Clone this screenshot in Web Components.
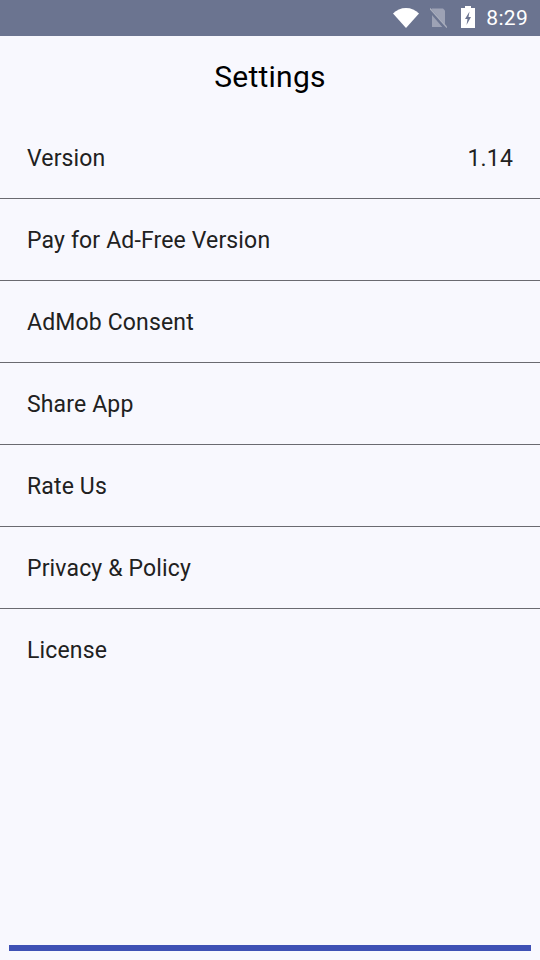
<!DOCTYPE html>
<html>
<head>
<meta charset="utf-8">
<style>
  html, body { margin: 0; height: 100%; background: #f8f8fe; }
  body { font-family: Roboto, "Liberation Sans", sans-serif; }
</style>
</head>
<body>
<settings-screen>
  <settings-row>Version<span slot="value">1.14</span></settings-row>
  <settings-row>Pay for Ad-Free Version</settings-row>
  <settings-row>AdMob Consent</settings-row>
  <settings-row>Share App</settings-row>
  <settings-row>Rate Us</settings-row>
  <settings-row>Privacy &amp; Policy</settings-row>
  <settings-row last>License</settings-row>
</settings-screen>
<script>
class StatusBar extends HTMLElement {
  constructor() {
    super();
    this.attachShadow({mode: 'open'});
  }

  connectedCallback() {
    this.shadowRoot.innerHTML = `
      <style>
        :host {
          display: flex;
          align-items: center;
          justify-content: flex-end;
          height: 36px;
          background: #6b7490;
          color: #fff;
          padding-right: 12px;
          box-sizing: border-box;
        }
        svg { display: block; flex: none; }
        .wifi { margin-right: 11px; }
        .sim { margin-right: 14px; }
        .battery { margin-right: 11px; margin-bottom: 2px; }
        .time { font-size: 21px; line-height: 36px; letter-spacing: 0.3px; }
      </style>
      <svg class="wifi" width="26" height="20" viewBox="0 0 26 20">
        <path d="M0 5.500C3.400 2 8 0 13 0s9.600 2 13 5.500L13 20z" fill="#fff"/>
      </svg>
      <svg class="sim" width="17" height="20" viewBox="0 0 17 20">
        <path d="M2 0.500h11l2 2V19H2z" fill="#9da2b5"/>
        <path d="M0 2l15 17.500" stroke="#6b7490" stroke-width="3.500" fill="none"/>
        <path d="M0 0.500l17 19" stroke="#a9aebd" stroke-width="1.500" fill="none"/>
      </svg>
      <svg class="battery" width="14" height="22" viewBox="0 0 14 22">
        <path d="M4 0h6v2h4v20H0V2h4z" fill="#fff"/>
        <path d="M8.500 5.500L4 13h2.500L5.500 19l4.500-8h-2.500z" fill="#6b7490"/>
      </svg>
      <span class="time">8:29</span>
    `;
  }
}

class SettingsRow extends HTMLElement {
  constructor() {
    super();
    this.attachShadow({mode: 'open'});
  }

  connectedCallback() {
    this.shadowRoot.innerHTML = `
      <style>
        :host {
          display: flex;
          align-items: center;
          justify-content: space-between;
          height: 82px;
          box-sizing: border-box;
          padding: 2px 27px 0;
          font-size: 23px;
          letter-spacing: 0.15px;
          color: #212121;
          border-bottom: 1px solid #6a6a70;
        }
        :host([last]) { border-bottom-color: transparent; }
      </style>
      <slot></slot>
      <slot name="value"></slot>
    `;
  }
}

class SettingsScreen extends HTMLElement {
  constructor() {
    super();
    this.attachShadow({mode: 'open'});
  }

  connectedCallback() {
    this.shadowRoot.innerHTML = `
      <style>
        :host {
          display: flex;
          flex-direction: column;
          height: 960px;
          background: #f8f8fe;
          overflow: hidden;
        }
        h1 {
          margin: 0;
          height: 81px;
          line-height: 82px;
          text-align: center;
          font-size: 30px;
          font-weight: 400;
          letter-spacing: 0.25px;
          color: #000;
        }
        .list { flex: 1; }
        .indicator {
          height: 6px;
          margin: 0 9px 9px;
          background: #3f51b5;
        }
      </style>
      <status-bar></status-bar>
      <h1>Settings</h1>
      <div class="list"><slot></slot></div>
      <div class="indicator"></div>
    `;
  }
}

customElements.define('status-bar', StatusBar);
customElements.define('settings-row', SettingsRow);
customElements.define('settings-screen', SettingsScreen);
</script>
</body>
</html>
